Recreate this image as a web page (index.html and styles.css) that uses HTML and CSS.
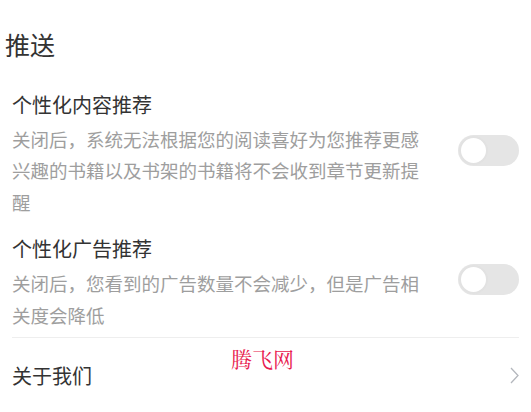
FILE: index.html
```html
<!DOCTYPE html>
<html lang="zh-CN">
<head>
  <meta charset="UTF-8">
  <title>推送设置</title>
  <link rel="stylesheet" href="styles.css">
</head>
<body>

  <div class="page">
    <h2 class="section-title">推送</h2>

    <div class="setting-row">
      <div class="setting-text">
        <p class="setting-name">个性化内容推荐</p>
        <p class="setting-desc">关闭后，系统无法根据您的阅读喜好为您推荐更感兴趣的书籍以及书架的书籍将不会收到章节更新提醒</p>
      </div>
      <span class="switch"><span class="knob"></span></span>
    </div>

    <div class="setting-row">
      <div class="setting-text">
        <p class="setting-name">个性化广告推荐</p>
        <p class="setting-desc">关闭后，您看到的广告数量不会减少，但是广告相关度会降低</p>
      </div>
      <span class="switch"><span class="knob"></span></span>
    </div>

    <div class="link-row">
      <span class="setting-name">关于我们</span>
      <svg class="chevron" width="9" height="17" viewBox="0 0 9 17">
        <polyline points="1,1 8,8.5 1,16" fill="none" stroke="#b4b7bd" stroke-width="1.3"/>
      </svg>
    </div>

    <span class="watermark">腾飞网</span>
  </div>

</body>
</html>
```

FILE: styles.css
```css
body {
  margin: 0;
  background: #fff;
  font-family: "Noto Sans CJK SC", "Noto Sans", sans-serif;
}
p {
  margin: 0;
}
.page {
  position: relative;
  padding: 0 12px 0 12px;
}
.section-title {
  margin: 0 0 0 -7px;
  padding: 26px 0 17.5px;
  font-size: 25px;
  line-height: 36px;
  font-weight: normal;
  color: #333;
}
.setting-row {
  display: flex;
  align-items: center;
  gap: 30px;
  padding: 8px 0 6px;
}
.setting-text {
  flex: 1;
}
.setting-name {
  font-size: 20px;
  line-height: 34px;
  color: #333;
  margin-bottom: 2px;
}
.setting-desc {
  font-size: 18.5px;
  line-height: 31.5px;
  color: #9e9e9e;
}
.switch {
  position: relative;
  flex: none;
  width: 61px;
  height: 31px;
  margin-bottom: 5px;
  border-radius: 16px;
  background: #e5e5e5;
}
.knob {
  position: absolute;
  left: 1px;
  top: 1px;
  width: 29px;
  height: 29px;
  box-sizing: border-box;
  border-radius: 50%;
  background: #fff;
  border: 2px solid #e2e2e2;
}
.link-row {
  display: flex;
  align-items: center;
  justify-content: space-between;
  border-top: 1px solid #eeeeee;
  padding: 20.5px 0 20px;
}
.link-row .setting-name {
  margin: 0;
}
.chevron {
  margin-right: 0;
}
.watermark {
  position: absolute;
  left: 231px;
  top: 343px;
  font-family: "Noto Serif CJK SC", "Liberation Serif", serif;
  font-size: 21px;
  color: #e8194d;
}
```
